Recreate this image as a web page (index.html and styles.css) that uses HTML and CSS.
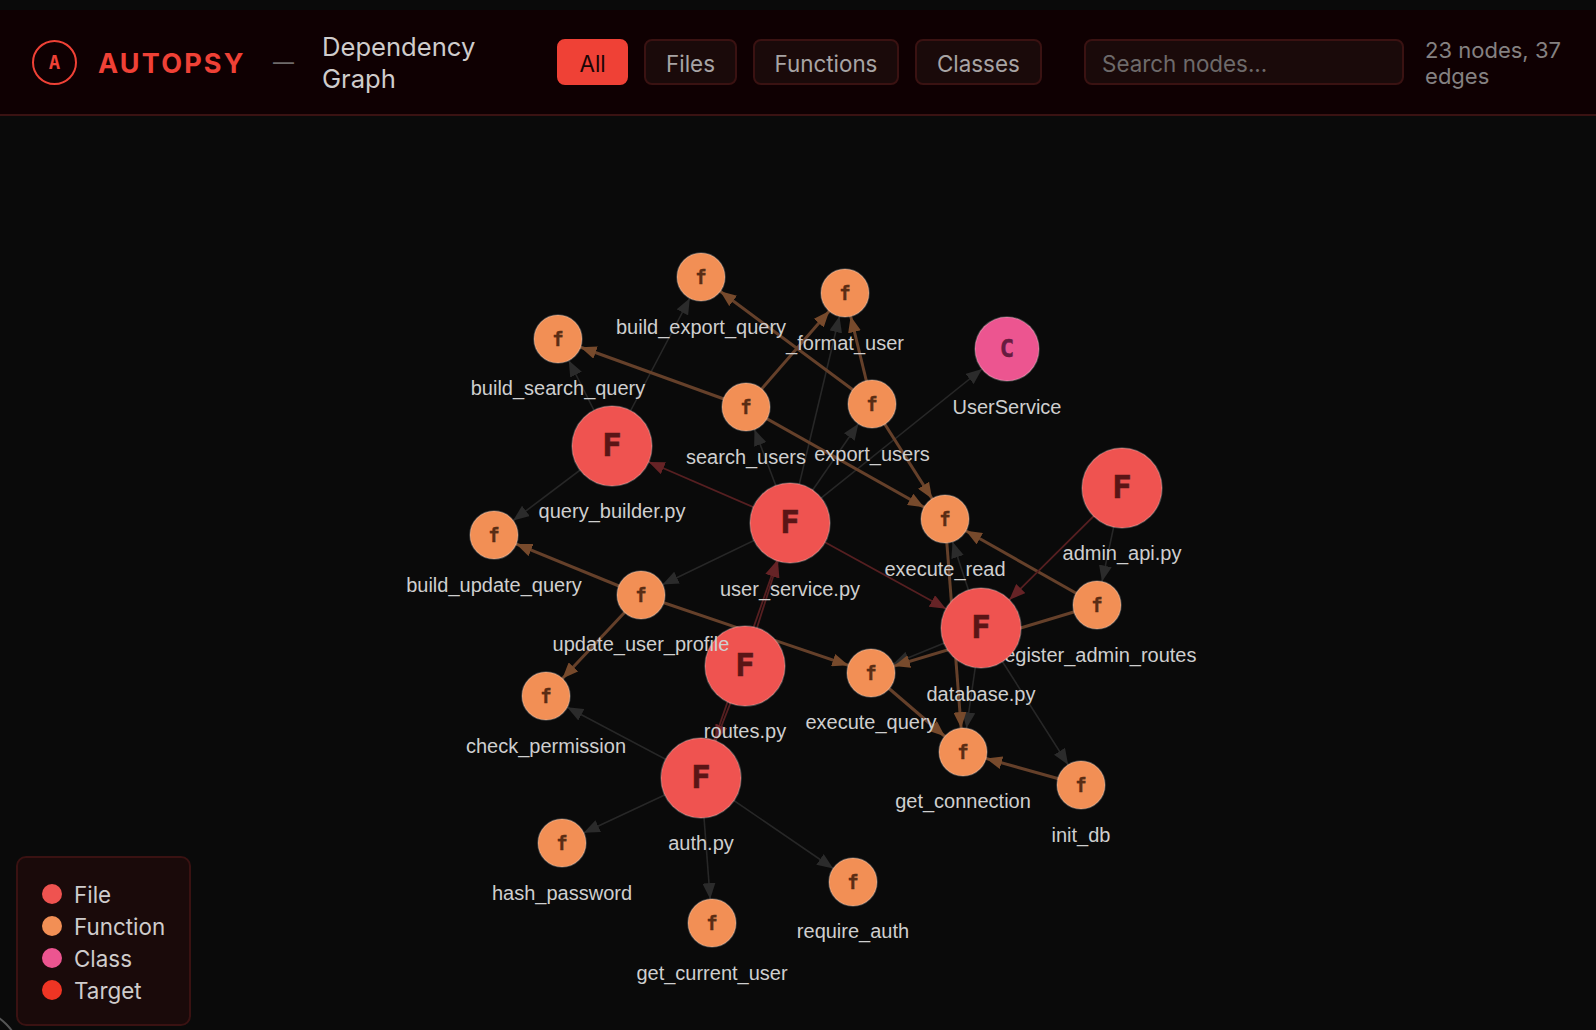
FILE: index.html
```html
<!DOCTYPE html>
<html>
<head>
  <title>Autopsy - Dependency Graph</title>
  <link rel="stylesheet" href="styles.css">
</head>
<body>
  <div class="header">
    <div class="logo">A</div>
    <div class="brand">AUTOPSY</div>
    <div class="dash">—</div>
    <div class="title">Dependency Graph</div>
    <div class="filters">
      <button class="filter active">All</button>
      <button class="filter">Files</button>
      <button class="filter">Functions</button>
      <button class="filter">Classes</button>
    </div>
    <input class="search" type="text" placeholder="Search nodes...">
    <div class="stats">23 nodes, 37 edges</div>
  </div>

  <div class="canvas">
    <svg class="graph" width="1596" height="914" viewBox="0 116 1596 914">
      <defs>
        <marker id="gray-f" markerUnits="userSpaceOnUse" markerWidth="16" markerHeight="13" refX="40" refY="6.5" orient="auto"><path class="head-gray" d="M0 0L16 6.5L0 13z"/></marker>
        <marker id="gray-c" markerUnits="userSpaceOnUse" markerWidth="16" markerHeight="13" refX="48" refY="6.5" orient="auto"><path class="head-gray" d="M0 0L16 6.5L0 13z"/></marker>
        <marker id="call-f" markerUnits="userSpaceOnUse" markerWidth="16" markerHeight="13" refX="40" refY="6.5" orient="auto"><path class="head-call" d="M0 0L16 6.5L0 13z"/></marker>
        <marker id="imp-F" markerUnits="userSpaceOnUse" markerWidth="16" markerHeight="13" refX="56" refY="6.5" orient="auto"><path class="head-imp" d="M0 0L16 6.5L0 13z"/></marker>
      </defs>

      <!-- file contains -->
      <g class="edges-gray">
        <line x1="612" y1="446" x2="701" y2="277" marker-end="url(#gray-f)"/>
        <line x1="612" y1="446" x2="558" y2="339" marker-end="url(#gray-f)"/>
        <line x1="612" y1="446" x2="494" y2="535" marker-end="url(#gray-f)"/>
        <line x1="790" y1="523" x2="746" y2="407" marker-end="url(#gray-f)"/>
        <line x1="790" y1="523" x2="872" y2="404" marker-end="url(#gray-f)"/>
        <line x1="790" y1="523" x2="845" y2="293" marker-end="url(#gray-f)"/>
        <line x1="790" y1="523" x2="1007" y2="349" marker-end="url(#gray-c)"/>
        <line x1="790" y1="523" x2="641" y2="595" marker-end="url(#gray-f)"/>
        <line x1="981" y1="628" x2="945" y2="519" marker-end="url(#gray-f)"/>
        <line x1="981" y1="628" x2="871" y2="673" marker-end="url(#gray-f)"/>
        <line x1="981" y1="628" x2="963" y2="752" marker-end="url(#gray-f)"/>
        <line x1="981" y1="628" x2="1081" y2="785" marker-end="url(#gray-f)"/>
        <line x1="1122" y1="488" x2="1097" y2="605" marker-end="url(#gray-f)"/>
        <line x1="701" y1="778" x2="546" y2="696" marker-end="url(#gray-f)"/>
        <line x1="701" y1="778" x2="562" y2="843" marker-end="url(#gray-f)"/>
        <line x1="701" y1="778" x2="712" y2="923" marker-end="url(#gray-f)"/>
        <line x1="701" y1="778" x2="853" y2="882" marker-end="url(#gray-f)"/>
      </g>

      <!-- function calls -->
      <g class="edges-call">
        <line x1="746" y1="407" x2="558" y2="339" marker-end="url(#call-f)"/>
        <line x1="746" y1="407" x2="845" y2="293" marker-end="url(#call-f)"/>
        <line x1="746" y1="407" x2="945" y2="519" marker-end="url(#call-f)"/>
        <line x1="872" y1="404" x2="701" y2="277" marker-end="url(#call-f)"/>
        <line x1="872" y1="404" x2="845" y2="293" marker-end="url(#call-f)"/>
        <line x1="872" y1="404" x2="945" y2="519" marker-end="url(#call-f)"/>
        <line x1="641" y1="595" x2="494" y2="535" marker-end="url(#call-f)"/>
        <line x1="641" y1="595" x2="546" y2="696" marker-end="url(#call-f)"/>
        <line x1="641" y1="595" x2="871" y2="673" marker-end="url(#call-f)"/>
        <line x1="871" y1="673" x2="963" y2="752" marker-end="url(#call-f)"/>
        <line x1="1081" y1="785" x2="963" y2="752" marker-end="url(#call-f)"/>
        <line x1="1097" y1="605" x2="945" y2="519" marker-end="url(#call-f)"/>
        <line x1="1097" y1="605" x2="871" y2="673" marker-end="url(#call-f)"/>
        <line x1="945" y1="519" x2="963" y2="752" marker-end="url(#call-f)"/>
      </g>

      <!-- file imports -->
      <g class="edges-imp">
        <line x1="790" y1="523" x2="612" y2="446" marker-end="url(#imp-F)"/>
        <line x1="790" y1="523" x2="981" y2="628" marker-end="url(#imp-F)"/>
        <line x1="1122" y1="488" x2="981" y2="628" marker-end="url(#imp-F)"/>
        <line x1="745" y1="666" x2="790" y2="523" marker-end="url(#imp-F)"/>
        <line x1="701" y1="778" x2="790" y2="523" marker-end="url(#imp-F)"/>
        <line x1="745" y1="666" x2="701" y2="778" marker-end="url(#imp-F)"/>
      </g>

      <g class="node file">
        <circle cx="745" cy="666" r="40"/>
        <text class="glyph" x="745" y="676">F</text>
        <text class="label" x="745" y="738">routes.py</text>
      </g>
      <g class="node file">
        <circle cx="701" cy="778" r="40"/>
        <text class="glyph" x="701" y="788">F</text>
        <text class="label" x="701" y="850">auth.py</text>
      </g>
      <g class="node file">
        <circle cx="612" cy="446" r="40"/>
        <text class="glyph" x="612" y="456">F</text>
        <text class="label" x="612" y="518">query_builder.py</text>
      </g>
      <g class="node file">
        <circle cx="790" cy="523" r="40"/>
        <text class="glyph" x="790" y="533">F</text>
        <text class="label" x="790" y="596">user_service.py</text>
      </g>
      <g class="node file">
        <circle cx="1122" cy="488" r="40"/>
        <text class="glyph" x="1122" y="498">F</text>
        <text class="label" x="1122" y="560">admin_api.py</text>
      </g>

      <g class="node class">
        <circle cx="1007" cy="349" r="32"/>
        <text class="glyph" x="1007" y="357">C</text>
        <text class="label" x="1007" y="414">UserService</text>
      </g>

      <g class="node func">
        <circle cx="701" cy="277" r="24"/>
        <text class="glyph" x="701" y="284">f</text>
        <text class="label" x="701" y="334">build_export_query</text>
      </g>
      <g class="node func">
        <circle cx="558" cy="339" r="24"/>
        <text class="glyph" x="558" y="346">f</text>
        <text class="label" x="558" y="395">build_search_query</text>
      </g>
      <g class="node func">
        <circle cx="746" cy="407" r="24"/>
        <text class="glyph" x="746" y="414">f</text>
        <text class="label" x="746" y="464">search_users</text>
      </g>
      <g class="node func">
        <circle cx="845" cy="293" r="24"/>
        <text class="glyph" x="845" y="300">f</text>
        <text class="label" x="845" y="350">_format_user</text>
      </g>
      <g class="node func">
        <circle cx="872" cy="404" r="24"/>
        <text class="glyph" x="872" y="411">f</text>
        <text class="label" x="872" y="461">export_users</text>
      </g>
      <g class="node func">
        <circle cx="945" cy="519" r="24"/>
        <text class="glyph" x="945" y="526">f</text>
        <text class="label" x="945" y="576">execute_read</text>
      </g>
      <g class="node func">
        <circle cx="494" cy="535" r="24"/>
        <text class="glyph" x="494" y="542">f</text>
        <text class="label" x="494" y="592">build_update_query</text>
      </g>
      <g class="node func">
        <circle cx="641" cy="595" r="24"/>
        <text class="glyph" x="641" y="602">f</text>
        <text class="label" x="641" y="651">update_user_profile</text>
      </g>
      <g class="node func">
        <circle cx="546" cy="696" r="24"/>
        <text class="glyph" x="546" y="703">f</text>
        <text class="label" x="546" y="753">check_permission</text>
      </g>
      <g class="node func">
        <circle cx="562" cy="843" r="24"/>
        <text class="glyph" x="562" y="850">f</text>
        <text class="label" x="562" y="900">hash_password</text>
      </g>
      <g class="node func">
        <circle cx="712" cy="923" r="24"/>
        <text class="glyph" x="712" y="930">f</text>
        <text class="label" x="712" y="980">get_current_user</text>
      </g>
      <g class="node func">
        <circle cx="853" cy="882" r="24"/>
        <text class="glyph" x="853" y="889">f</text>
        <text class="label" x="853" y="938">require_auth</text>
      </g>
      <g class="node func">
        <circle cx="1097" cy="605" r="24"/>
        <text class="glyph" x="1097" y="612">f</text>
        <text class="label" x="1097" y="662">register_admin_routes</text>
      </g>
      <g class="node func">
        <circle cx="871" cy="673" r="24"/>
        <text class="glyph" x="871" y="680">f</text>
        <text class="label" x="871" y="729">execute_query</text>
      </g>
      <g class="node func">
        <circle cx="963" cy="752" r="24"/>
        <text class="glyph" x="963" y="759">f</text>
        <text class="label" x="963" y="808">get_connection</text>
      </g>
      <g class="node func">
        <circle cx="1081" cy="785" r="24"/>
        <text class="glyph" x="1081" y="792">f</text>
        <text class="label" x="1081" y="842">init_db</text>
      </g>

      <g class="node file">
        <circle cx="981" cy="628" r="40"/>
        <text class="glyph" x="981" y="638">F</text>
        <text class="label" x="981" y="701">database.py</text>
      </g>
    </svg>

    <div class="legend">
      <div class="legend-row"><span class="dot dot-file"></span>File</div>
      <div class="legend-row"><span class="dot dot-func"></span>Function</div>
      <div class="legend-row"><span class="dot dot-class"></span>Class</div>
      <div class="legend-row"><span class="dot dot-target"></span>Target</div>
    </div>
    <div class="corner"></div>
  </div>
</body>
</html>
```

FILE: styles.css
```css
* {
  margin: 0;
  padding: 0;
  box-sizing: border-box;
}

body {
  width: 1596px;
  height: 1030px;
  padding-top: 10px;
  overflow: hidden;
  background-color: #0a0a0a;
  font-family: Inter, "Liberation Sans", sans-serif;
}

.header {
  display: flex;
  align-items: center;
  height: 106px;
  padding: 0 32px;
  background-color: #0f0002;
  border-bottom: 2px solid #3a1212;
}

.logo {
  flex: none;
  display: flex;
  align-items: center;
  justify-content: center;
  width: 45px;
  height: 45px;
  margin-right: 21px;
  border: 2px solid #ef4136;
  border-radius: 50%;
  color: #ef4136;
  font-family: "DejaVu Sans Mono", monospace;
  font-weight: bold;
  font-size: 19px;
}

.brand {
  flex: none;
  width: 145px;
  padding-top: 2px;
  color: #ef4136;
  font-weight: 700;
  font-size: 27px;
  letter-spacing: 2.2px;
  white-space: nowrap;
}

.dash {
  flex: none;
  width: 49px;
  margin-left: 30px;
  color: #6e6a6a;
  font-size: 21px;
}

.title {
  flex: none;
  width: 235px;
  padding-top: 2px;
  padding-right: 60px;
  color: #cfcccc;
  font-size: 25.6px;
  line-height: 32px;
}

.filters {
  flex: none;
  display: flex;
  gap: 16px;
  margin-right: 42.5px;
}

.filter {
  height: 46px;
  padding: 2px 19.75px 0;
  background-color: #1a0a0a;
  border: 2px solid #3a1212;
  border-radius: 8px;
  color: #a8a4a4;
  font-family: inherit;
  font-size: 22.4px;
}

.filter.active {
  padding: 2px 20.5px 0;
  background-color: #ef4136;
  border-color: #ef4136;
  color: #1a0505;
}

.search {
  flex: none;
  width: 320px;
  height: 46px;
  margin-right: 21px;
  padding: 2px 16px 0;
  background-color: #1a0a0a;
  border: 2px solid #3a1212;
  border-radius: 8px;
  color: #cfcccc;
  font-family: inherit;
  font-size: 22.4px;
}

.search::placeholder {
  color: #6e6a6a;
}

.stats {
  flex: none;
  width: 142px;
  padding-top: 2px;
  color: #858181;
  font-size: 22px;
  line-height: 26px;
}

.canvas {
  position: relative;
  height: 914px;
  overflow: hidden;
}

.graph {
  display: block;
}

.edges-gray line {
  stroke: #272727;
  stroke-width: 1.6;
}

.edges-call line {
  stroke: #65402a;
  stroke-width: 3;
}

.edges-imp line {
  stroke: #561f21;
  stroke-width: 1.8;
}

.head-gray { fill: #2b2b2b; }
.head-call { fill: #774a2c; }
.head-imp { fill: #662326; }

.node circle {
  stroke: rgba(255, 255, 255, 0.25);
  stroke-width: 1.5;
}

.node.file circle { fill: #ef5350; }
.node.func circle { fill: #f28f55; }
.node.class circle { fill: #ec5590; }

.glyph {
  font-family: "DejaVu Sans Mono", monospace;
  font-weight: bold;
  text-anchor: middle;
}

.file .glyph {
  font-size: 32px;
  fill: #5a1516;
  stroke: #5a1516;
  stroke-width: 0.6;
}

.func .glyph {
  font-size: 19px;
  fill: #5a2d14;
  stroke: #5a2d14;
  stroke-width: 0.3;
}

.class .glyph {
  font-size: 24px;
  fill: #661c40;
  stroke: #661c40;
  stroke-width: 0.4;
}

.label {
  font-family: "Liberation Sans", Arial, sans-serif;
  font-size: 20px;
  fill: #cfcfcf;
  text-anchor: middle;
}

.legend {
  position: absolute;
  left: 16px;
  bottom: 4px;
  width: 175px;
  height: 170px;
  padding: 20px 24px;
  background-color: #1a0a0a;
  border: 2px solid #3a1212;
  border-radius: 10px;
  color: #cfcccc;
  font-size: 22.4px;
}

.legend-row {
  display: flex;
  align-items: center;
  gap: 12px;
  height: 32px;
}

.dot {
  flex: none;
  width: 20px;
  height: 20px;
  border-radius: 50%;
}

.dot-file { background-color: #ef5350; }
.dot-func { background-color: #f28f55; }
.dot-class { background-color: #ec5590; }
.dot-target { background-color: #ee3524; }

/* window corner of the capture */
.corner {
  position: absolute;
  left: -82px;
  bottom: -82px;
  width: 104px;
  height: 104px;
  border: 2px solid #555555;
  border-radius: 50%;
}
```
